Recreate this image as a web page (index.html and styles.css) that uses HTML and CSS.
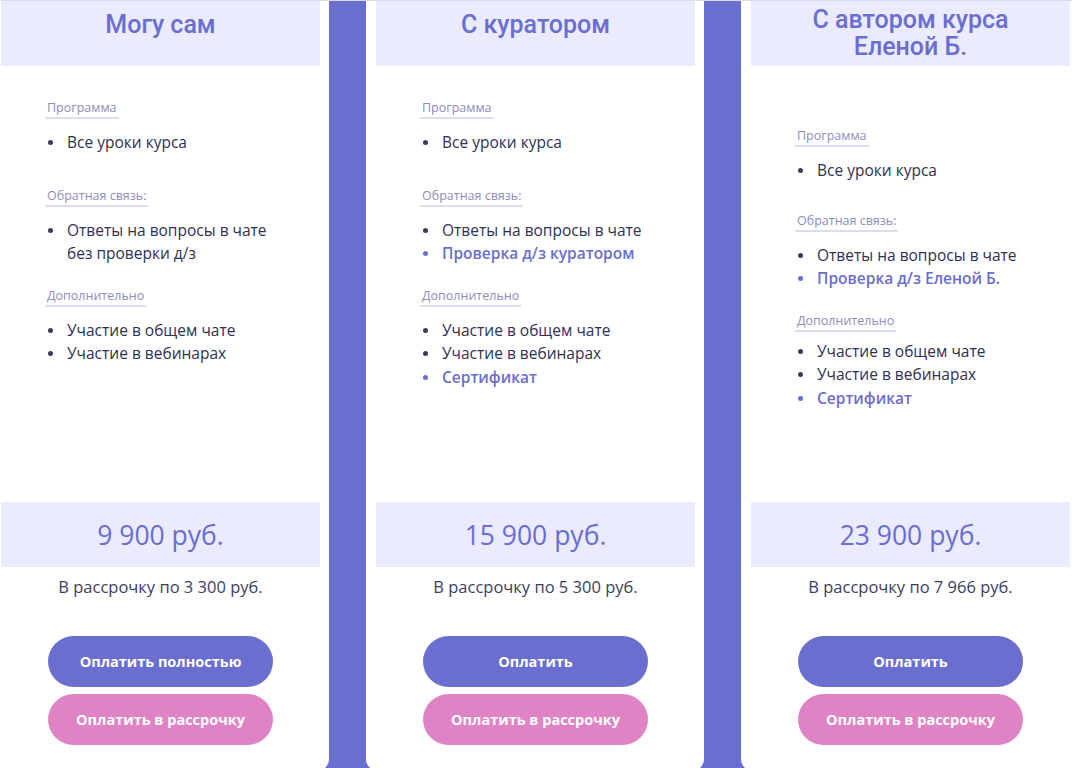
FILE: index.html
```html
<!DOCTYPE html>
<html lang="ru">
<head>
<meta charset="utf-8">
<title>Тарифы</title>
<link rel="stylesheet" href="styles.css">
</head>
<body>
<main class="board">
  <section class="card">
    <header class="card-head"><h2 class="card-title">Могу сам</h2></header>
    <div class="card-body">
      <div class="group">
        <span class="label">Программа</span>
        <ul class="list"><li>Все уроки курса</li></ul>
      </div>
      <div class="group">
        <span class="label">Обратная связь:</span>
        <ul class="list"><li>Ответы на вопросы в чате<br>без проверки д/з</li></ul>
      </div>
      <div class="group">
        <span class="label">Дополнительно</span>
        <ul class="list"><li>Участие в общем чате</li><li>Участие в вебинарах</li></ul>
      </div>
    </div>
    <div class="price">9 900 руб.</div>
    <p class="installment">В рассрочку по 3 300 руб.</p>
    <div class="actions">
      <a class="btn btn-main" href="#">Оплатить полностью</a>
      <a class="btn btn-pink" href="#">Оплатить в рассрочку</a>
    </div>
  </section>

  <section class="card">
    <header class="card-head"><h2 class="card-title">С куратором</h2></header>
    <div class="card-body">
      <div class="group">
        <span class="label">Программа</span>
        <ul class="list"><li>Все уроки курса</li></ul>
      </div>
      <div class="group">
        <span class="label">Обратная связь:</span>
        <ul class="list"><li>Ответы на вопросы в чате</li><li class="hl">Проверка д/з куратором</li></ul>
      </div>
      <div class="group">
        <span class="label">Дополнительно</span>
        <ul class="list"><li>Участие в общем чате</li><li>Участие в вебинарах</li><li class="hl">Сертификат</li></ul>
      </div>
    </div>
    <div class="price">15 900 руб.</div>
    <p class="installment">В рассрочку по 5 300 руб.</p>
    <div class="actions">
      <a class="btn btn-main" href="#">Оплатить</a>
      <a class="btn btn-pink" href="#">Оплатить в рассрочку</a>
    </div>
  </section>

  <section class="card">
    <header class="card-head card-head--two"><h2 class="card-title">С автором курса<br>Еленой Б.</h2></header>
    <div class="card-body card-body--low">
      <div class="group">
        <span class="label">Программа</span>
        <ul class="list"><li>Все уроки курса</li></ul>
      </div>
      <div class="group">
        <span class="label">Обратная связь:</span>
        <ul class="list"><li>Ответы на вопросы в чате</li><li class="hl">Проверка д/з Еленой Б.</li></ul>
      </div>
      <div class="group">
        <span class="label">Дополнительно</span>
        <ul class="list"><li>Участие в общем чате</li><li>Участие в вебинарах</li><li class="hl">Сертификат</li></ul>
      </div>
    </div>
    <div class="price">23 900 руб.</div>
    <p class="installment">В рассрочку по 7 966 руб.</p>
    <div class="actions">
      <a class="btn btn-main" href="#">Оплатить</a>
      <a class="btn btn-pink" href="#">Оплатить в рассрочку</a>
    </div>
  </section>
</main>
</body>
</html>
```

FILE: styles.css
```css
* { box-sizing: border-box; }

html, body {
  margin: 0;
  padding: 0;
}

body {
  height: 768px;
  overflow: hidden;
  background: #6a6ecf;
  border-top: 1px solid #dcdde3;
  font-family: "Open Sans", "Noto Sans", sans-serif;
  color: #35365a;
}

.board {
  display: flex;
  gap: 37px;
  margin-left: -9px;
}

.card {
  flex: 0 0 338px;
  height: 770px;
  background: #ffffff;
  border-radius: 0 0 12px 12px;
  padding: 0 9px 26px 10px;
  display: flex;
  flex-direction: column;
}

.card-head {
  height: 65px;
  background: #ebebff;
  padding-top: 10px;
  text-align: center;
}

.card-head--two { padding-top: 5px; }

.card-title {
  margin: 0;
  font-family: Roboto, sans-serif;
  font-size: 25px;
  line-height: 27px;
  font-weight: 500;
  color: #6a6ecf;
}

.card-body {
  flex: 1;
  padding: 29px 10px 0 44px;
}

.card-body--low { padding-top: 57px; }

.group + .group { margin-top: 17px; }
.group:first-child { padding-bottom: 11px; }
.card-body--low .group:first-child { padding-bottom: 8px; }
.card-body--low .group:last-child .list { margin-top: 8px; }

.label {
  display: inline-block;
  font-size: 12.5px;
  line-height: 17px;
  color: #8e8db8;
  padding: 0 2px 1px 2px;
  border-bottom: 2px solid #dddcee;
}

.list {
  list-style: none;
  margin: 12px 0 0 0;
  padding: 0;
}

.list li {
  position: relative;
  padding-left: 22px;
  font-size: 15.5px;
  line-height: 23.5px;
  font-weight: 400;
  color: #2f3052;
}

.list li::before {
  content: "";
  position: absolute;
  left: 3px;
  top: 9px;
  width: 5px;
  height: 5px;
  border-radius: 50%;
  background: #3a3b5c;
}

.list li.hl {
  font-weight: 600;
  color: #6a6ecf;
}

.list li.hl::before { background: #6a6ecf; }

.price {
  height: 65px;
  background: #ebebff;
  display: flex;
  align-items: center;
  justify-content: center;
  font-size: 26.5px;
  font-weight: 500;
  color: #6a6ecf;
}

.installment {
  margin: 8px 0 0 0;
  text-align: center;
  font-size: 16.5px;
  line-height: 24px;
  font-weight: 400;
  color: #3d3e5e;
}

.actions {
  margin-top: 37px;
  display: flex;
  flex-direction: column;
  align-items: center;
  gap: 7px;
}

.btn {
  display: flex;
  align-items: center;
  justify-content: center;
  width: 225px;
  height: 51px;
  border-radius: 26px;
  color: #ffffff;
  text-decoration: none;
  font-size: 14.5px;
  font-weight: 700;
}

.btn-main { background: #6a6ecf; }
.btn-pink { background: #e083c5; }
```
